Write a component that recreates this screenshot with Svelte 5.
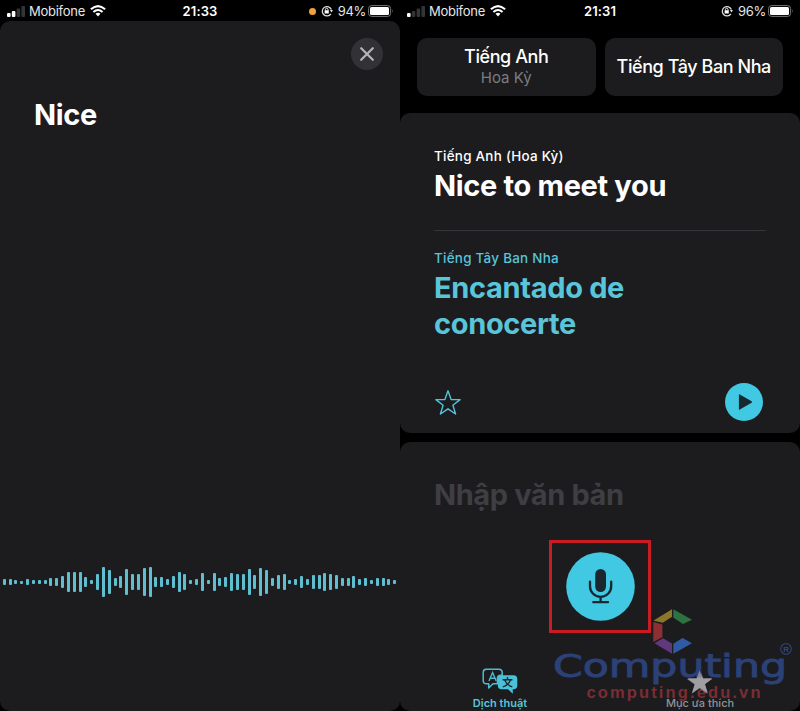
<script>
  const waves = [
    18, 18, 10, 9, 18, 12, 12, 12, 24, 26, 34, 60, 60, 60, 32, 10, 46, 90, 74, 26, 34, 80, 46, 46,
    84, 90, 30, 30, 16, 34, 60, 48, 10, 18, 54, 14, 52, 26, 32, 54, 48, 48, 76, 42, 84, 74, 26, 42,
    46, 12, 16, 38, 18, 42, 42, 54, 50, 40, 26, 26, 34, 18, 22, 12, 24, 24, 18, 10
  ];
</script>

{#snippet status(time, battery, level, recording)}
  <header class="status">
    <div class="side">
      <svg class="signal" width="18" height="11" viewBox="0 0 18 11">
        <rect x="0" y="7" width="3.6" height="4" rx="1" fill="#fff" />
        <rect x="4.8" y="5" width="3.6" height="6" rx="1" fill={level > 1 ? '#fff' : '#343436'} />
        <rect x="9.6" y="2.6" width="3.6" height="8.4" rx="1" fill="#343436" />
        <rect x="14.4" y="0" width="3.6" height="11" rx="1" fill="#343436" />
      </svg>
      <span class="carrier">Mobifone</span>
      <svg class="wifi" width="16" height="12" viewBox="0 0 16 12" fill="none" stroke="#fff" stroke-width="2">
        <path d="M.9 4.3Q8-2.1 15.1 4.3" />
        <path d="M3.4 7Q8 2.9 12.6 7" />
        <path d="M5.5 8.8Q8 6.5 10.5 8.8L8 11.5Z" fill="#fff" stroke="none" />
      </svg>
    </div>
    <span class="time">{time}</span>
    <div class="side right">
      {#if recording}<i class="dot"></i>{/if}
      <svg class="lock" width="12" height="12" viewBox="0 0 12 12">
        <path d="M9.9 8.9A4.7 4.7 0 1 1 10.4 4.6" fill="none" stroke="#ddd" stroke-width="1.3" />
        <path d="M8.8 5h3.2l-1.5 2.4Z" fill="#ddd" />
        <rect x="3.6" y="5.3" width="4.2" height="3.2" rx=".5" fill="#fff" />
        <path d="M4.4 5.5V4.6a1.3 1.3 0 0 1 2.6 0v.9" fill="none" stroke="#fff" stroke-width=".9" />
      </svg>
      <span class="percent">{battery}</span>
      <svg width="26" height="12" viewBox="0 0 26 12">
        <rect x=".6" y=".6" width="22" height="10.8" rx="3" fill="none" stroke="#77777b" stroke-width="1" />
        <rect x="2" y="2" width="19" height="8" rx="1.5" fill="#fff" />
        <path d="M24.2 4.2q1.4 1.8 0 3.6Z" fill="#77777b" />
      </svg>
    </div>
  </header>
{/snippet}

<main>
  <section class="phone">
    {@render status('21:33', '94%', 2, true)}
    <div class="sheet">
      <button class="close" aria-label="Đóng">
        <svg width="14" height="14" viewBox="0 0 14 14"><path d="M1.2 1.2 12.8 12.8M12.8 1.2 1.2 12.8" stroke="#b4b4b9" stroke-width="2.2" stroke-linecap="round" /></svg>
      </button>
      <h1 class="heard">Nice</h1>
      <div class="wave">
        {#each waves as h}
          <i style="height:{h / 3}px"></i>
        {/each}
      </div>
    </div>
  </section>

  <section class="phone">
    {@render status('21:31', '96%', 1, false)}
    <div class="languages">
      <button><span>Tiếng Anh</span><small>Hoa Kỳ</small></button>
      <button><span>Tiếng Tây Ban Nha</span></button>
    </div>
    <article class="card">
      <p class="label">Tiếng Anh (Hoa Kỳ)</p>
      <h2 class="source">Nice to meet you</h2>
      <hr />
      <p class="label cyan">Tiếng Tây Ban Nha</p>
      <h2 class="cyan target">Encantado de<br />conocerte</h2>
      <div class="actions">
        <svg width="28" height="27" viewBox="0 0 28 27"><path d="M14 1.8 17.1 10.5 26.1 10.6 18.9 16.2 21.6 25 14 19.8 6.4 25 9.1 16.2 1.9 10.6 10.9 10.5Z" fill="none" stroke="#53c3d9" stroke-width="1.4" stroke-linejoin="round" /></svg>
        <svg width="38" height="38" viewBox="0 0 38 38"><circle cx="19" cy="19" r="19" fill="#41c8e2" /><path d="M13.9 11.9v14.2q0 1 .9.5L26.6 19.7q1-.7 0-1.4L14.8 11.4q-.9-.5-.9.5Z" fill="#17282e" /></svg>
      </div>
    </article>
    <article class="input">
      <p class="placeholder">Nhập văn bản</p>
      <div class="highlight">
        <svg width="69" height="69" viewBox="0 0 69 69">
          <circle cx="34.5" cy="34.5" r="34.3" fill="#41c8e2" />
          <rect x="29.2" y="17" width="10.8" height="23" rx="5.4" fill="#1a272e" />
          <path d="M24 29.7v4.6a10.6 10.6 0 0 0 21.2 0v-4.6M34.6 45v5M27.3 50.2h14.7" fill="none" stroke="#1a272e" stroke-width="2.3" stroke-linecap="round" />
        </svg>
      </div>
      <nav>
        <div class="tab cyan">
          <svg width="36" height="27" viewBox="0 0 36 27">
            <path d="M4.2 1.2H16.8Q20.2 1.2 20.2 4.5V7.3H18.7Q15.4 7.3 15.4 10.6V15.8H11L6.7 20V15.8H4.5Q1.2 15.8 1.2 12.5V4.5Q1.2 1.2 4.2 1.2Z" fill="none" stroke="#4fbbd1" stroke-width="1.5" stroke-linejoin="round" />
            <path d="M7 13 10.6 4.5 14.2 13M8.2 10.2h4.8" fill="none" stroke="#4fbbd1" stroke-width="1.4" />
            <path d="M19.5 7.2H31.5Q35.3 7.2 35.3 11V17.5Q35.3 21.2 31.5 21.2H30.8V25.8L26 21.2H19.5Q15.8 21.2 15.8 17.5V11Q15.8 7.2 19.5 7.2Z" fill="#4bc1d9" />
            <path d="M25.5 8.9v2.2M20.6 11.7h9.8M28.5 12Q26.3 17.2 20.8 18.9M22.6 12Q24.8 17.2 30.3 18.9" fill="none" stroke="#172930" stroke-width="1.4" />
          </svg>
          <span>Dịch thuật</span>
        </div>
        <div class="tab favorites">
          <svg width="26" height="26" viewBox="0 0 26 26"><path d="M13 .8 16.1 9.8H25.5L18 15.4 20.8 24.5 13 18.9 5.2 24.5 8 15.4 .5 9.8H9.9Z" fill="#98989c" /></svg>
          <span>Mục ưa thích</span>
        </div>
      </nav>
    </article>
  </section>

  <svg class="brand" width="250" height="105" viewBox="550 606 250 105">
    <path d="M654 620.2 672 609.2V616.7L662.8 622.8 654 620.8Z" fill="#8c7629" />
    <path d="M673.3 609.2 692 619.8 683 624 673.3 617.5Z" fill="#2d7341" />
    <path d="M653.3 621.9 662.4 624.6V637.3L653.3 642Z" fill="#8d3036" />
    <path d="M654.5 643.2 663 638.3 672 643.6V653.8Z" fill="#61387c" />
    <path d="M673.3 643.7 682.5 638 692 643.2 673.3 653.8Z" fill="#315aa5" />
    <text x="553" y="677" font-size="31.5" textLength="234" lengthAdjust="spacingAndGlyphs" fill="#2b4177" stroke="#2b4177" stroke-width=".9" font-family="DejaVu Sans, sans-serif">Computing</text>
    <text x="586.5" y="698" font-size="16.5" textLength="174" lengthAdjust="spacing" fill="#7b2d33" font-weight="700" font-family="Liberation Sans, sans-serif">computing.edu.vn</text>
    <circle cx="786" cy="649" r="5.3" fill="none" stroke="#2b4177" stroke-width="1.2" />
    <text x="783.3" y="652" font-size="8" fill="#314680" font-weight="700" font-family="Liberation Sans, sans-serif">R</text>
    <path d="M699.5 670.5 702.6 679H712L704.5 684.6 707.3 693.7 699.5 688.2 691.7 693.7 694.5 684.6 687 679H696.4Z" fill="#a2a2a5" opacity=".75" />
  </svg>
</main>

<style>
  :global(body) { margin: 0; background: #000; }
  main { position: relative; display: flex; width: 800px; height: 711px; overflow: hidden; background: #000; font-family: Inter, "Noto Sans", sans-serif; color: #fff; }
  * { box-sizing: border-box; }
  h1, h2, p { margin: 0; }
  button { border: 0; padding: 0; color: inherit; font: inherit; }
  .phone { width: 400px; height: 711px; display: flex; flex-direction: column; }
  .status { height: 21px; flex: none; display: grid; grid-template-columns: 1fr auto 1fr; align-items: center; padding: 1px 7px 0 7px; font-size: 13px; }
  .side { display: flex; align-items: center; }
  .right { justify-content: flex-end; margin-right: -1px; }
  .carrier { margin-left: 4px; width: 57px; letter-spacing: -.27px; color: #e6e6e6; white-space: nowrap; }
  .wifi { margin-left: 4px; }
  .time { font-weight: 600; font-size: 13px; letter-spacing: .1px; }
  .dot { width: 7px; height: 7px; border-radius: 50%; background: #f1a33b; margin-right: 5px; }
  .percent { margin: 0 2px 0 5px; letter-spacing: -.3px; color: #e6e6e6; }
  .sheet { flex: 1; display: flex; flex-direction: column; background: #1c1c1f; border-radius: 10px; }
  .close { align-self: flex-end; width: 32px; height: 32px; margin: 17px 17px 0 0; border-radius: 50%; background: #323236; display: grid; place-items: center; }
  .heard { margin: 27px 0 0 34px; font-size: 29px; line-height: 36px; font-weight: 700; letter-spacing: -.35px; }
  .wave { display: flex; align-items: center; justify-content: space-between; height: 36px; margin: 431px 2.8px 0 2.8px; }
  .wave i { width: 3px; border-radius: 1px; background: #5fbfd0; }
  .languages { display: flex; gap: 9px; height: 58px; margin: 17px 17px 0; }
  .languages button { flex: 1 1 0; min-width: 0; background: #1c1c1e; border-radius: 10px; display: flex; flex-direction: column; align-items: center; justify-content: center; font-size: 18px; line-height: 22px; font-weight: 500; letter-spacing: -.42px; white-space: nowrap; }
  .languages small { font-size: 15px; line-height: 20px; font-weight: 400; letter-spacing: 0; color: #7b7b80; }
  .card { height: 320px; margin-top: 17px; padding: 34px 34px 0; border-radius: 10px; background: #1c1c1f; flex: none; }
  .label { font-size: 13.4px; line-height: 18px; font-weight: 500; letter-spacing: .28px; }
  .cyan { color: #5ac4d9; }
  h2 { font-size: 29px; line-height: 36px; font-weight: 700; letter-spacing: -.33px; }
  .source { margin-top: 3px; }
  hr { border: 0; height: 1px; background: #343438; margin: 26px 0 18px; }
  .target { margin-top: 3px; }
  .actions { display: flex; align-items: center; justify-content: space-between; margin: 41px 3px 0 0; }
  .input { flex: 1; margin-top: 9px; display: flex; flex-direction: column; border-radius: 10px; background: #1c1c1f; }
  .placeholder { margin: 35px 0 0 34px; color: #3e3e43; font-size: 29px; line-height: 36px; font-weight: 700; letter-spacing: -.4px; }
  .highlight { width: 102px; height: 93px; margin: 27px auto 0; border: 3px solid #c91c22; display: grid; place-items: center; flex: none; }
  nav { display: flex; margin-top: 35px; }
  .tab { width: 50%; display: flex; flex-direction: column; align-items: center; font-size: 11px; line-height: 14px; font-weight: 600; }
  .tab svg { height: 27px; }
  .tab span { margin-top: 1px; }
  .favorites { font-weight: 500; color: #929296; }
  .brand { position: absolute; left: 550px; top: 606px; pointer-events: none; }
</style>
